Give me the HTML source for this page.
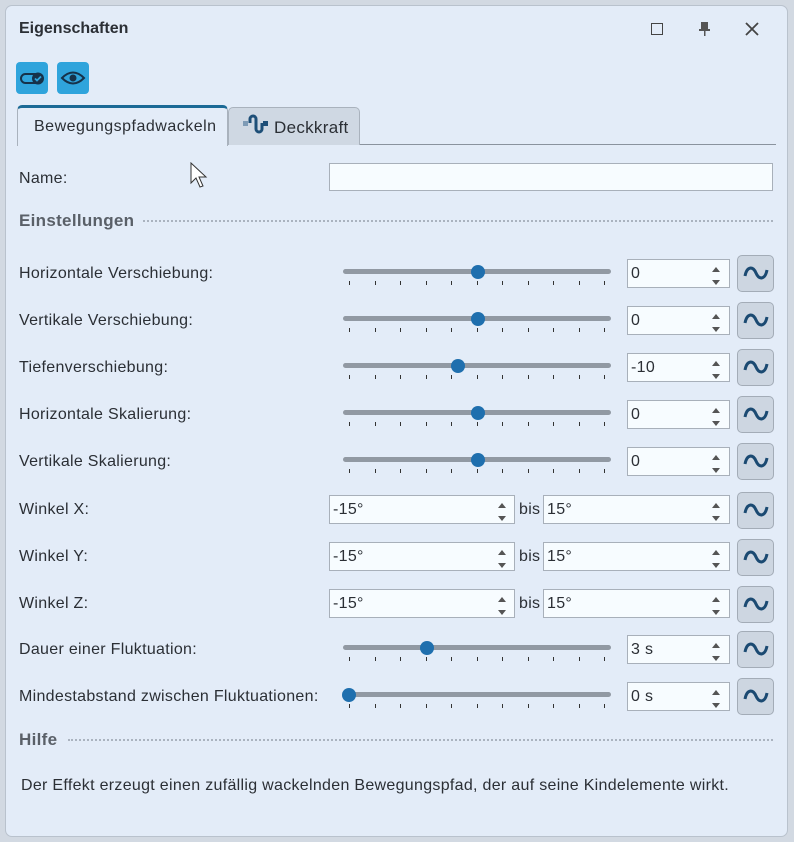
<!DOCTYPE html>
<html><head><meta charset="utf-8"><style>
*{margin:0;padding:0;box-sizing:border-box}
body{width:794px;height:842px;background:#d2d9e2;font-family:"Liberation Sans",Tahoma,sans-serif;font-size:16px;letter-spacing:0.3px;color:#2b2f35;position:relative;overflow:hidden}
.panel{position:absolute;left:5px;top:5px;width:783px;height:832px;background:#e3ecf8;border:1px solid #b9c2cd;border-radius:7px}
.a{position:absolute;white-space:nowrap}
.lbl{position:absolute;left:19px;white-space:nowrap}
.track{position:absolute;left:343px;width:268px;height:5px;background:#9199a3;border-radius:3px}
.knob{position:absolute;width:14px;height:14px;border-radius:50%;background:#1f6fae}
.tick{position:absolute;width:1px;height:4px;background:#333}
.inp{position:absolute;height:29px;background:#f7fcff;border:1px solid #a8b0ba;padding-left:3px;line-height:28px;font-size:16px}
.up,.dn{position:absolute;width:0;height:0;border-left:4px solid transparent;border-right:4px solid transparent}
.up{border-bottom:5px solid #555}
.dn{border-top:5px solid #555}
.wb{position:absolute;left:737px;width:37px;height:37px;background:#cdd6e1;border:1px solid #a3acb7;border-radius:5px}
.h{position:absolute;left:19px;font-size:17px;font-weight:bold;color:#5a6068}
.dot{position:absolute;height:0;border-top:2px dotted #aab3bf}
</style></head><body>
<div class="panel"></div>
<div class="a" style="left:19px;top:20px;font-weight:bold;font-size:16px;letter-spacing:0">Eigenschaften</div>
<div class="a" style="left:651px;top:23px;width:12px;height:12px;border:1.5px solid #444"></div>
<svg class="a" style="left:698px;top:21px" width="14" height="16"><rect x="3" y="1" width="7" height="7" fill="#555"/><rect x="1" y="8" width="11" height="2" fill="#555"/><rect x="6" y="9" width="1.5" height="6" fill="#555"/></svg>
<svg class="a" style="left:745px;top:22px" width="14" height="14"><path d="M1 1L13 13M13 1L1 13" stroke="#444" stroke-width="1.8"/></svg>
<div class="a" style="left:16px;top:62px;width:32px;height:32px;background:#2fa4dc;border-radius:4px"></div>
<svg class="a" style="left:16px;top:62px" width="32" height="32"><rect x="5" y="12" width="18" height="9" rx="4.5" fill="none" stroke="#16324a" stroke-width="2"/><circle cx="22" cy="16.5" r="6" fill="#16324a"/><path d="M19 16.5l2 2 4-4" stroke="#2fa4dc" stroke-width="1.8" fill="none"/></svg>
<div class="a" style="left:57px;top:62px;width:32px;height:32px;background:#2fa4dc;border-radius:4px"></div>
<svg class="a" style="left:57px;top:62px" width="32" height="32"><path d="M5 16Q16 5 27 16Q16 27 5 16Z" fill="none" stroke="#16324a" stroke-width="2"/><circle cx="16" cy="16" r="3.5" fill="#16324a"/></svg>
<div class="a" style="left:227px;top:144px;width:549px;height:1px;background:#8a939e"></div>
<div class="a" style="left:228px;top:107px;width:132px;height:38px;background:#cfd8e3;border:1px solid #a9b2bd;border-bottom:none;border-radius:5px 5px 0 0"></div>
<svg class="a" style="left:242px;top:113px" width="28" height="24"><rect x="1" y="8" width="5" height="5" fill="#7e9bb6"/><rect x="21" y="8" width="5" height="5" fill="#1e4f78"/><path d="M8 10V6a3 3 0 0 1 6 0v10a3 3 0 0 0 6 0v-6" fill="none" stroke="#1e4f78" stroke-width="3"/></svg>
<div class="a" style="left:274px;top:118px;font-size:17px">Deckkraft</div>
<div class="a" style="left:17px;top:105px;width:211px;height:41px;background:#e3ecf8;border:1px solid #a9b2bd;border-top:3px solid #1b6a96;border-bottom:none;border-radius:5px 5px 0 0"></div>
<div class="a" style="left:34px;top:118px;font-size:16px;letter-spacing:0.5px">Bewegungspfadwackeln</div>
<svg class="a" style="left:190px;top:162px" width="20" height="28"><path d="M1 1V21L6 16L10 25L13 24L9 15H16Z" fill="#fff" stroke="#333" stroke-width="1"/></svg>
<div class="lbl" style="top:170px">Name:</div>
<div class="inp" style="left:329px;top:163px;width:444px;height:28px"></div>
<div class="h" style="top:211px">Einstellungen</div><div class="dot" style="left:143px;width:630px;top:220px"></div>
<div class="h" style="top:730px">Hilfe</div><div class="dot" style="left:68px;width:705px;top:739px"></div>
<div class="a" style="left:21px;top:777px">Der Effekt erzeugt einen zufällig wackelnden Bewegungspfad, der auf seine Kindelemente wirkt.</div>
<div id="rows"></div>
<script>
var H='';
function spin(x,c){return '<div class="up" style="left:'+x+'px;top:'+(c-6)+'px"></div><div class="dn" style="left:'+x+'px;top:'+(c+7)+'px"></div>';}
function wave(c){return '<div class="wb" style="top:'+(c-16)+'px"></div><svg class="a" style="left:741px;top:'+(c-8)+'px" width="30" height="20"><path d="M4 13C6 3 12 3 15 10S24 17 26 7" fill="none" stroke="#1b4a72" stroke-width="3"/></svg>';}
function slider(c,label,k,val){
 H+='<div class="lbl" style="top:'+(c-6)+'px">'+label+'</div><div class="track" style="top:'+(c-2)+'px"></div>';
 for(var i=0;i<11;i++)H+='<div class="tick" style="left:'+Math.round(349+i*25.5)+'px;top:'+(c+10)+'px"></div>';
 H+='<div class="knob" style="left:'+(k-7)+'px;top:'+(c-6)+'px"></div>';
 H+='<div class="inp" style="left:627px;top:'+(c-12)+'px;width:103px">'+val+'</div>'+spin(712,c+2)+wave(c);
}
function ang(c,label){
 H+='<div class="lbl" style="top:'+(c-8)+'px">'+label+'</div>';
 H+='<div class="inp" style="left:329px;top:'+(c-14)+'px;width:186px">-15°</div>'+spin(498,c);
 H+='<div class="a" style="left:519px;top:'+(c-8)+'px">bis</div>';
 H+='<div class="inp" style="left:543px;top:'+(c-14)+'px;width:187px">15°</div>'+spin(712,c)+wave(c-1);
}
slider(271,'Horizontale Verschiebung:',478,'0');
slider(318,'Vertikale Verschiebung:',478,'0');
slider(365,'Tiefenverschiebung:',458,'-10');
slider(412,'Horizontale Skalierung:',478,'0');
slider(459,'Vertikale Skalierung:',478,'0');
ang(509,'Winkel X:');ang(556,'Winkel Y:');ang(603,'Winkel Z:');
slider(647,'Dauer einer Fluktuation:',427,'3 s');
slider(694,'Mindestabstand zwischen Fluktuationen:',349,'0 s');
document.getElementById('rows').innerHTML=H;
</script>
</body></html>
